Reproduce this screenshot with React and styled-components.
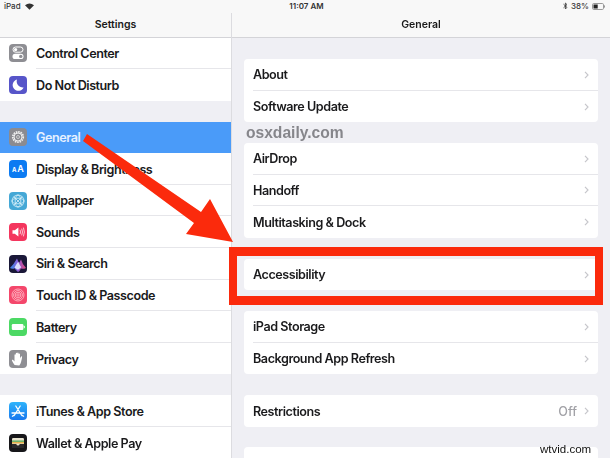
import styled, { createGlobalStyle } from "styled-components"

const GlobalStyle = createGlobalStyle`
  html, body { margin: 0; padding: 0; background: #efeff4; }
  body { font-family: Inter, "Liberation Sans", sans-serif; overflow: hidden; }
`

const Shell = styled.div`
  position: relative;
  width: 610px;
  height: 458px;
  overflow: hidden;
`
const Page = styled.div`
  position: relative;
  height: 458px;
  display: flex;
  flex-direction: column;
  filter: blur(0.3px);
`
const StatusBar = styled.div`
  height: 12.5px;
  flex: none;
  display: grid;
  grid-template-columns: 1fr auto 1fr;
  align-items: center;
  padding: 0 5px 0 4px;
  background: #f8f8f8;
  font-size: 8px;
  font-weight: 600;
  color: #333;
`
const StatusLeft = styled.div`
  display: flex;
  align-items: center;
  gap: 4px;
  font-weight: 500;
`
const StatusTime = styled.span`
  padding-left: 4px;
`
const StatusRight = styled.div`
  display: flex;
  align-items: center;
  justify-content: flex-end;
  gap: 3px;
  font-weight: 500;
`
const Columns = styled.div`
  flex: 1;
  display: flex;
  min-height: 0;
`
const Sidebar = styled.div`
  width: 232px;
  flex: none;
  box-sizing: border-box;
  border-right: 1px solid #dcdce0;
  background: #efeff4;
`
const Detail = styled.div`
  flex: 1;
  background: #efeff4;
`
const NavBar = styled.div`
  height: 25px;
  box-sizing: border-box;
  display: flex;
  align-items: center;
  justify-content: center;
  background: #f8f8f8;
  border-bottom: 1px solid #d4d4d8;
  font-size: 10.5px;
  font-weight: 600;
  color: #1a1a1a;
`
const SideGroup = styled.div`
  background: #fff;
  margin-bottom: 21px;
`
const Cards = styled.div`
  display: flex;
  flex-direction: column;
  gap: 20.8px;
  padding: 21.5px 12px 0;
`
const Card = styled.div`
  background: #fff;
  border-radius: 4px;
  overflow: hidden;
`
const Row = styled.div`
  height: 31.6px;
  box-sizing: border-box;
  display: flex;
  align-items: center;
  padding-left: 9px;
  background: ${(p) => (p.$active ? "#4a9bf9" : "transparent")};
`
const RowBody = styled.div`
  flex: 1;
  height: 100%;
  min-width: 0;
  box-sizing: border-box;
  display: flex;
  align-items: center;
  justify-content: space-between;
  padding: 1px 9px 0 0;
  margin-left: ${(p) => (p.$side ? "9px" : "0")};
  font-size: 12.6px;
  font-weight: 600;
  letter-spacing: -0.45px;
  color: ${(p) => (p.$active ? "#e6f1ff" : "#1a1a1c")};
  border-bottom: ${(p) => (p.$last ? "none" : "1px solid #e6e6ea")};
`
const RowEnd = styled.span`
  display: flex;
  align-items: center;
  gap: 7px;
  letter-spacing: 0;
  font-weight: 500;
  color: #a2a2a7;
`
const Icon = styled.svg`
  width: 18px;
  height: 18px;
  flex: none;
  display: block;
`
const Watermark = styled.div`
  position: absolute;
  left: 246px;
  top: 122.5px;
  font-family: "Liberation Sans", sans-serif;
  font-size: 15.6px;
  line-height: 20px;
  font-weight: 700;
  color: #86868b;
`
const Callout = styled.div`
  position: absolute;
  left: 229px;
  top: 247px;
  width: 374px;
  height: 58px;
  box-sizing: border-box;
  border: 9px solid #fb2a0c;
  border-left-width: 8px;
  border-right-width: 8px;
`
const Arrow = styled.svg`
  position: absolute;
  left: 0;
  top: 0;
  width: 610px;
  height: 458px;
`
const Credit = styled.div`
  position: absolute;
  left: 540px;
  top: 441px;
  font-family: "Liberation Sans", sans-serif;
  font-size: 11.5px;
  line-height: 16px;
  color: #111;
`

const Chevron = () => (
  <svg width="5" height="8" viewBox="0 0 5 8" fill="none">
    <path d="M1 .8 4 4 1 7.2" stroke="#c7c7cc" strokeWidth="1.2" />
  </svg>
)

const Tile = ({ fill, children }) => (
  <Icon viewBox="0 0 18 18">
    <rect width="18" height="18" rx="4" fill={fill} />
    {children}
  </Icon>
)

const icons = {
  control: (
    <Tile fill="#8e8e93">
      <rect x="4" y="3" width="10" height="5.2" rx="2.6" fill="none" stroke="#fff" strokeWidth="1" />
      <circle cx="6.6" cy="5.6" r="1.6" fill="#fff" />
      <rect x="3.5" y="9.8" width="11" height="5.2" rx="2.6" fill="#fff" />
      <circle cx="11.8" cy="12.4" r="1.7" fill="#8e8e93" />
    </Tile>
  ),
  moon: (
    <Tile fill="#5755c9">
      <path d="M8 3.6a5.7 5.7 0 1 0 6.6 7.8A6 6 0 0 1 8 3.6Z" fill="#fff" />
    </Tile>
  ),
  gear: (
    <Tile fill="#8b8b90">
      <circle cx="9" cy="9" r="5.2" fill="none" stroke="#eee" strokeWidth="1.8" strokeDasharray="1.6 .8" />
      <circle cx="9" cy="9" r="4" fill="none" stroke="#eee" strokeWidth="1" />
      <circle cx="9" cy="9" r="1.5" fill="none" stroke="#ddd" strokeWidth=".8" />
    </Tile>
  ),
  display: (
    <Tile fill="#0c7bf2">
      <text x="3" y="11.8" fontSize="6" fontWeight="700" fill="#fff" fontFamily="Inter, sans-serif">A</text>
      <text x="8.2" y="12.4" fontSize="9" fontWeight="600" fill="#fff" fontFamily="Inter, sans-serif">A</text>
    </Tile>
  ),
  wallpaper: (
    <Tile fill="#45a8d6">
      <g fill="none" stroke="#d9f1fa" strokeWidth=".8">
        <circle cx="9" cy="9" r="6" />
        <ellipse cx="9" cy="9" rx="2.8" ry="6" />
        <ellipse cx="9" cy="9" rx="6" ry="2.8" />
        <path d="M4.7 4.7 13.3 13.3M13.3 4.7 4.7 13.3" />
      </g>
    </Tile>
  ),
  sounds: (
    <Tile fill="#f4365e">
      <path d="M3.5 7.2h2.3L9.4 4.4v9.2L5.8 10.8H3.5Z" fill="#fff" />
      <path d="M11 6.8q1 2.2 0 4.4M12.7 5.6q1.6 3.4 0 6.8M14.4 4.6q2 4.4 0 8.8" fill="none" stroke="#ffd3dc" strokeWidth=".9" />
    </Tile>
  ),
  siri: (
    <Icon viewBox="0 0 18 18">
      <defs>
        <linearGradient id="siriGlow" x1="0" y1="0.5" x2="1" y2="0.5">
          <stop offset="0" stopColor="#2f8fe8" />
          <stop offset=".5" stopColor="#8d5bd8" />
          <stop offset="1" stopColor="#e2487a" />
        </linearGradient>
      </defs>
      <rect width="18" height="18" rx="4" fill="#1a1838" />
      <path d="M1 13Q5 9 8 3.5q1.2 3 2 4.5 1.2-1.6 2-3.5 1.4 5 5 8.5-3 1.4-5 .5-1.2 2.6-3 3.5-2-1.4-3.4-3.8Q3.4 14.5 1 13Z" fill="url(#siriGlow)" />
      <path d="M5.5 12.5Q7.8 8.5 9.2 6.8q1.3 3 3 5.5-2 1.8-3.2 2.4-1.8-.8-3.5-2.2Z" fill="#e4ecff" opacity=".9" />
    </Icon>
  ),
  touch: (
    <Tile fill="#f4476b">
      <g fill="none" stroke="#ffb3c2" strokeWidth=".9">
        <circle cx="9" cy="9" r="6" />
        <circle cx="9" cy="9" r="4.4" />
        <circle cx="9" cy="9" r="2.8" />
        <circle cx="9" cy="9" r="1.2" />
      </g>
    </Tile>
  ),
  battery: (
    <Tile fill="#4cd964">
      <rect x="2.8" y="6" width="11.6" height="6" rx="1.2" fill="#fff" />
      <rect x="14.8" y="7.8" width="1" height="2.4" rx=".4" fill="#fff" />
    </Tile>
  ),
  privacy: (
    <Tile fill="#8e8e93">
      <path d="M5.6 15q-1-1-2.6-4.2c-.3-.8.6-1.3 1.2-.7L5.5 11.5V5c0-1 1.3-1 1.3 0v3.2V3.6c0-1 1.4-1 1.4 0v4.6V3.2c0-1 1.4-1 1.4 0v5V4.2c0-1 1.4-1 1.4 0v4.6c.2-1.2 1.4-3 2-2.4.3.4-.2 2.5-.7 4.6-.4 1.8-1 3.4-2 4.4Z" fill="#fff" />
    </Tile>
  ),
  store: (
    <Icon viewBox="0 0 18 18">
      <defs>
        <linearGradient id="storeFill" x1="0" y1="0" x2="0" y2="1">
          <stop offset="0" stopColor="#2fb4fb" />
          <stop offset="1" stopColor="#1877ee" />
        </linearGradient>
      </defs>
      <rect width="18" height="18" rx="4" fill="url(#storeFill)" />
      <path d="M6.8 4 12.8 13.5M11.2 4 5.2 13.5M3 11h12M3.4 14.2l1.4-.8M14.6 14.2l-1.4-.8" fill="none" stroke="#fff" strokeWidth="1.3" strokeLinecap="round" />
    </Icon>
  ),
  wallet: (
    <Tile fill="#17171a">
      <rect x="3" y="4" width="12" height="10" rx="1.2" fill="#e9e4cf" />
      <rect x="3" y="6.4" width="12" height="1.6" fill="#6fb56d" />
      <rect x="3" y="8" width="12" height="1.5" fill="#e8b04e" />
      <path d="M3 10h4.2q.6 1.6 1.8 1.6T10.8 10H15v4H3Z" fill="#2a2a2c" />
    </Tile>
  ),
}

const sideGroups = [
  [
    { label: "Control Center", icon: "control" },
    { label: "Do Not Disturb", icon: "moon" },
  ],
  [
    { label: "General", icon: "gear", active: true },
    { label: "Display & Brightness", icon: "display" },
    { label: "Wallpaper", icon: "wallpaper" },
    { label: "Sounds", icon: "sounds" },
    { label: "Siri & Search", icon: "siri" },
    { label: "Touch ID & Passcode", icon: "touch" },
    { label: "Battery", icon: "battery" },
    { label: "Privacy", icon: "privacy" },
  ],
  [
    { label: "iTunes & App Store", icon: "store" },
    { label: "Wallet & Apple Pay", icon: "wallet" },
  ],
]

const detailGroups = [
  [{ label: "About" }, { label: "Software Update" }],
  [{ label: "AirDrop" }, { label: "Handoff" }, { label: "Multitasking & Dock" }],
  [{ label: "Accessibility" }],
  [{ label: "iPad Storage" }, { label: "Background App Refresh" }],
  [{ label: "Restrictions", value: "Off" }],
  [{ label: "" }],
]

const App = () => (
  <Shell>
    <GlobalStyle />
    <Page>
      <StatusBar>
        <StatusLeft>
          iPad
          <svg width="9" height="7" viewBox="0 0 9 7">
            <path d="M4.5 6.8 0 2.2Q4.5-1.2 9 2.2Z" fill="#333" />
          </svg>
        </StatusLeft>
        <StatusTime>11:07 AM</StatusTime>
        <StatusRight>
          <svg width="5" height="8" viewBox="0 0 5 8" fill="none">
            <path d="M.5 2.2 4 5.4 2.4 7V1L4 2.6.5 5.8" stroke="#333" strokeWidth=".8" />
          </svg>
          38%
          <svg width="13" height="7" viewBox="0 0 13 7">
            <rect x=".5" y=".5" width="11" height="6" rx="1.2" fill="none" stroke="#999" />
            <rect x="1.5" y="1.5" width="4.2" height="4" fill="#222" />
            <rect x="12" y="2.4" width="1" height="2.2" fill="#999" />
          </svg>
        </StatusRight>
      </StatusBar>
      <Columns>
        <Sidebar>
          <NavBar>Settings</NavBar>
          {sideGroups.map((group, i) => (
            <SideGroup key={i}>
              {group.map((item, j) => (
                <Row key={item.label} $active={item.active}>
                  {icons[item.icon]}
                  <RowBody $side $active={item.active} $last={j === group.length - 1 || item.active}>
                    {item.label}
                  </RowBody>
                </Row>
              ))}
            </SideGroup>
          ))}
        </Sidebar>
        <Detail>
          <NavBar>General</NavBar>
          <Cards>
            {detailGroups.map((group, i) => (
              <Card key={i}>
                {group.map((item, j) => (
                  <Row key={j}>
                    <RowBody $last={j === group.length - 1}>
                      {item.label}
                      {item.label && (
                        <RowEnd>
                          {item.value}
                          <Chevron />
                        </RowEnd>
                      )}
                    </RowBody>
                  </Row>
                ))}
              </Card>
            ))}
          </Cards>
        </Detail>
      </Columns>
      <Watermark>osxdaily.com</Watermark>
      <Callout />
      <Arrow viewBox="0 0 610 458">
        <polygon points="87,134 201,212 210,199 233,242 186,234 194,223 83,141" fill="#fb2a0c" />
      </Arrow>
    </Page>
    <Credit>wtvid.com</Credit>
  </Shell>
)

export default App
